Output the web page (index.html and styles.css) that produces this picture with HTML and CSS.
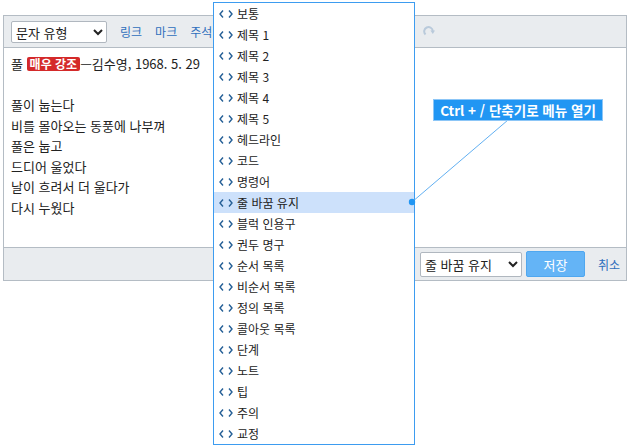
FILE: index.html
```html
<!DOCTYPE html>
<html lang="ko">
<head>
    <meta charset="utf-8">
    <meta name="viewport" content="width=device-width, initial-scale=1.0">
    <title>문단 형식 편집기</title>
    <link rel="stylesheet" href="styles.css">
</head>
<body>
    <div class="editor">
        <div class="toolbar">
            <select class="type-select">
                <option>문자 유형</option>
            </select>
            <a class="tool-link" href="#">링크</a>
            <a class="tool-link" href="#">마크</a>
            <a class="tool-link" href="#">주석</a>
            <span class="spacer"></span>
            <svg class="redo" width="12" height="12" viewBox="0 0 12 12">
                <path d="M2.5 8.5 A4.3 4.3 0 1 1 9.8 5.2" fill="none" stroke="#b9cadb" stroke-width="2"/>
                <path d="M7.4 4.6 L12 4.6 L9.8 8 Z" fill="#b9cadb"/>
            </svg>
        </div>

        <div class="content">
            <div class="line">풀 <span class="badge">매우 강조</span>—김수영, 1968. 5. 29</div>
            <div class="line"></div>
            <div class="line">풀이 눕는다</div>
            <div class="line">비를 몰아오는 동풍에 나부껴</div>
            <div class="line">풀은 눕고</div>
            <div class="line">드디어 울었다</div>
            <div class="line">날이 흐려서 더 울다가</div>
            <div class="line">다시 누웠다</div>
        </div>

        <div class="footer">
            <select class="wrap-select">
                <option>줄 바꿈 유지</option>
            </select>
            <button class="save">저장</button>
            <a class="cancel" href="#">취소</a>
        </div>
    </div>

    <!-- 블록 형식 메뉴 -->
    <ul class="menu" id="blockMenu"></ul>

    <svg class="pointer" width="630" height="447">
        <line x1="412" y1="202" x2="508" y2="120" stroke="#62b0f2" stroke-width="1"/>
        <circle cx="412" cy="202" r="3.2" fill="#2196f3"/>
    </svg>
    <div class="hint">Ctrl + / 단축기로 메뉴 열기</div>

    <script>
        const blockTypes = ['보통', '제목 1', '제목 2', '제목 3', '제목 4', '제목 5', '헤드라인', '코드', '명령어',
            '줄 바꿈 유지', '블럭 인용구', '권두 명구', '순서 목록', '비순서 목록', '정의 목록', '콜아웃 목록',
            '단계', '노트', '팁', '주의', '교정'];
        const selected = '줄 바꿈 유지';

        const menu = document.getElementById('blockMenu');
        blockTypes.forEach(name => {
            const li = document.createElement('li');
            li.className = name === selected ? 'item active' : 'item';
            li.innerHTML = '<svg class="tag" width="14" height="8" viewBox="0 0 14 8">' +
                '<path d="M4 0.5 L1 4 L4 7.5 M10 0.5 L13 4 L10 7.5" fill="none" stroke="#245f96" stroke-width="1.4"/></svg>' +
                '<span>' + name + '</span>';
            menu.appendChild(li);
        });
    </script>
</body>
</html>
```

FILE: styles.css
```css
body {
    margin: 0;
    padding: 15px 3px;
    font-family: "Noto Sans CJK KR", "Noto Sans", sans-serif;
    font-size: 13px;
    color: #222;
}

.editor {
    border: 1px solid #b4bcc4;
}

.toolbar {
    display: flex;
    align-items: center;
    gap: 13px;
    height: 31px;
    padding: 0 7px;
    background: #e9ecef;
    border-bottom: 1px solid #b4bcc4;
}

.type-select {
    width: 96px;
    height: 22px;
    font-family: inherit;
    font-size: 13px;
    color: #222;
    background: #fff;
    border: 1px solid #b0b7bf;
    border-radius: 2px;
}

.tool-link {
    color: #2f6fbd;
    text-decoration: none;
    font-size: 12px;
}

.spacer {
    flex: 1;
}

.redo {
    margin-right: 184px;
}

.content {
    height: 193px;
    padding: 6px 7px 0;
}

.line {
    height: 20.5px;
    line-height: 20.5px;
}

.badge {
    display: inline-block;
    background: #d42a2a;
    color: #fff;
    font-weight: bold;
    font-size: 12px;
    line-height: 14px;
    padding: 0 3px;
    border-radius: 2px;
}

.footer {
    display: flex;
    align-items: center;
    justify-content: flex-end;
    gap: 4px;
    height: 32px;
    padding: 0 6px;
    background: #e9ecef;
    border-top: 1px solid #b4bcc4;
}

.wrap-select {
    width: 102px;
    height: 25px;
    font-family: inherit;
    font-size: 13px;
    color: #222;
    background: #fff;
    border: 1px solid #b0b7bf;
    border-radius: 2px;
}

.save {
    width: 59px;
    height: 26px;
    font-family: inherit;
    font-size: 13px;
    color: #fff;
    background: #64b4f6;
    border: 1px solid #4fa7ef;
    border-radius: 2px;
    margin-right: 9px;
}

.cancel {
    color: #2f6fbd;
    text-decoration: none;
    font-size: 12px;
}

.menu {
    position: absolute;
    top: 2px;
    left: 213px;
    width: 200px;
    margin: 0;
    padding: 0;
    list-style: none;
    background: #fff;
    border: 1px solid #3d9cf0;
}

.item {
    display: flex;
    align-items: center;
    gap: 4px;
    height: 21px;
    padding-left: 5px;
    font-size: 12px;
    color: #222;
}

.item.active {
    background: #cde1fb;
}

.pointer {
    position: absolute;
    top: 0;
    left: 0;
    pointer-events: none;
}

.hint {
    position: absolute;
    top: 100px;
    left: 434px;
    width: 168px;
    height: 20px;
    line-height: 20px;
    text-align: center;
    background: #2196f3;
    color: #fff;
    font-weight: bold;
    font-size: 13.5px;
    box-shadow: 0 0 0 1px #8cc6f7;
}
```
